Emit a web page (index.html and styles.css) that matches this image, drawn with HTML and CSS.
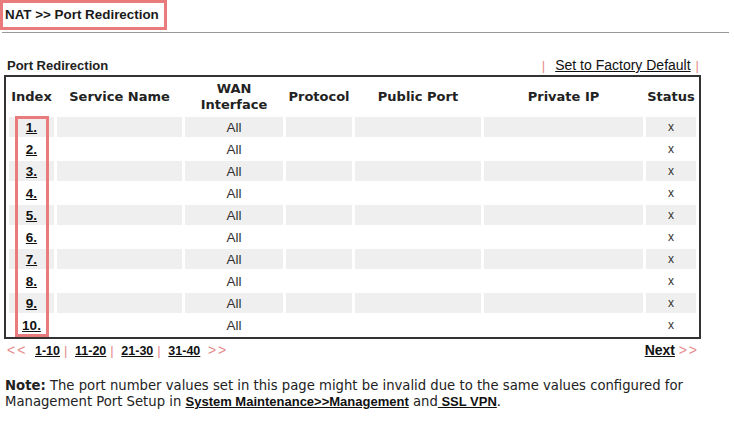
FILE: index.html
```html
<!DOCTYPE html>
<html lang="en">
<head>
  <meta charset="UTF-8">
  <title>NAT >> Port Redirection</title>
  <link rel="stylesheet" href="styles.css">
</head>
<body>
  <div class="page-title">NAT &gt;&gt; Port Redirection</div>
  <div class="title-rule"></div>

  <div class="section-head">
    <span class="section-name">Port Redirection</span>
    <span class="factory"><span class="pipe">|</span><a href="#">Set to Factory Default</a><span class="pipe">|</span></span>
  </div>

  <div class="table-wrap">
    <table class="rules">
      <colgroup>
        <col class="c-index">
        <col class="c-service">
        <col class="c-wan">
        <col class="c-proto">
        <col class="c-public">
        <col class="c-private">
        <col class="c-status">
      </colgroup>
      <thead>
        <tr>
          <th>Index</th>
          <th>Service Name</th>
          <th>WAN<br>Interface</th>
          <th>Protocol</th>
          <th>Public Port</th>
          <th>Private IP</th>
          <th>Status</th>
        </tr>
      </thead>
      <tbody>
        <tr class="odd"><td class="idx"><a href="#">1.</a></td><td></td><td>All</td><td></td><td></td><td></td><td class="st">x</td></tr>
        <tr><td class="idx"><a href="#">2.</a></td><td></td><td>All</td><td></td><td></td><td></td><td class="st">x</td></tr>
        <tr class="odd"><td class="idx"><a href="#">3.</a></td><td></td><td>All</td><td></td><td></td><td></td><td class="st">x</td></tr>
        <tr><td class="idx"><a href="#">4.</a></td><td></td><td>All</td><td></td><td></td><td></td><td class="st">x</td></tr>
        <tr class="odd"><td class="idx"><a href="#">5.</a></td><td></td><td>All</td><td></td><td></td><td></td><td class="st">x</td></tr>
        <tr><td class="idx"><a href="#">6.</a></td><td></td><td>All</td><td></td><td></td><td></td><td class="st">x</td></tr>
        <tr class="odd"><td class="idx"><a href="#">7.</a></td><td></td><td>All</td><td></td><td></td><td></td><td class="st">x</td></tr>
        <tr><td class="idx"><a href="#">8.</a></td><td></td><td>All</td><td></td><td></td><td></td><td class="st">x</td></tr>
        <tr class="odd"><td class="idx"><a href="#">9.</a></td><td></td><td>All</td><td></td><td></td><td></td><td class="st">x</td></tr>
        <tr><td class="idx"><a href="#">10.</a></td><td></td><td>All</td><td></td><td></td><td></td><td class="st">x</td></tr>
      </tbody>
    </table>
    <div class="index-mark"></div>
  </div>

  <div class="pager">
    <span class="pages">
      <span class="arrow">&lt;&lt;</span>
      <a href="#">1-10</a><span class="pipe">|</span>
      <a href="#">11-20</a><span class="pipe">|</span>
      <a href="#">21-30</a><span class="pipe">|</span>
      <a href="#">31-40</a>
      <span class="arrow">&gt;&gt;</span>
    </span>
    <span class="next"><a href="#">Next</a> <span class="arrow">&gt;&gt;</span></span>
  </div>

  <p class="note">
    <b>Note:</b> The port number values set in this page might be invalid due to the same values configured for<br>
    Management Port Setup in <a href="#">System Maintenance&gt;&gt;Management</a> and<a href="#"> SSL VPN</a>.
  </p>
</body>
</html>
```

FILE: styles.css
```css
:root {
  --text-color: #222;
  --mark-color: #ea7b7d;
  --row-gray: #efefef;
  --pipe-color: #e58a8a;
}

body {
  margin: 0;
  font-family: 'Liberation Sans', Arial, sans-serif;
  font-size: 13px;
  color: var(--text-color);
  background: #fff;
  width: 734px;
}

a {
  color: #111;
  font-weight: bold;
  text-decoration: underline;
}

.page-title {
  display: inline-block;
  box-sizing: border-box;
  height: 30px;
  padding: 4px 5px 0 2px;
  border: 3px solid var(--mark-color);
  font-weight: bold;
  font-size: 13.4px;
  color: #1a1a1a;
}

.title-rule {
  margin: 2px 5px 0 2px;
  height: 1px;
  background: #999;
}

.section-head {
  display: flex;
  justify-content: space-between;
  align-items: flex-end;
  margin: 24px 0 0 7px;
  width: 692px;
  height: 16px;
}

.section-name {
  font-weight: bold;
  font-size: 13px;
}

.factory a {
  font-weight: normal;
  font-size: 14px;
  margin: 0 5px 0 10px;
}

.pipe {
  color: var(--pipe-color);
}

.table-wrap {
  position: relative;
  margin: 2px 0 0 4px;
  width: 697px;
}

.rules {
  width: 697px;
  table-layout: fixed;
  border: 2px solid #333;
  border-spacing: 3px 2px;
  font-family: 'DejaVu Sans', Verdana, sans-serif;
}

.c-index { width: 45px; }
.c-service { width: 125px; }
.c-wan { width: 98px; }
.c-proto { width: 66px; }
.c-public { width: 126px; }
.c-private { width: 159px; }
.c-status { width: 50px; }

.rules th {
  height: 36px;
  padding: 0;
  font-size: 13px;
  font-weight: bold;
  line-height: 16px;
  color: #222;
}

.rules td {
  height: 20px;
  padding: 0;
  text-align: center;
  font-family: 'Liberation Sans', Arial, sans-serif;
  font-size: 13.5px;
  color: #333;
}

.rules tr.odd td {
  background: var(--row-gray);
}

.rules td.idx a {
  font-size: 13.5px;
}

.rules td.st {
  font-size: 12px;
}

.index-mark {
  position: absolute;
  left: 11px;
  top: 41px;
  width: 34px;
  height: 221px;
  box-sizing: border-box;
  border: 3px solid var(--mark-color);
}

.pager {
  display: flex;
  justify-content: space-between;
  width: 692px;
  margin: 3px 0 0 7px;
  height: 16px;
  font-size: 13px;
}

.pages a {
  font-size: 12.5px;
  margin: 0 4px;
}

.arrow {
  color: var(--pipe-color);
  font-size: 14px;
  letter-spacing: 2px;
}

.next a {
  font-size: 14px;
}

.note {
  margin: 19px 0 0 5px;
  font-family: 'DejaVu Sans Condensed', 'DejaVu Sans', sans-serif;
  font-size: 14.7px;
  line-height: 16px;
  color: #222;
}

.note b {
  font-weight: bold;
}

.note a {
  font-family: 'Liberation Sans Narrow', 'Liberation Sans', Arial, sans-serif;
  font-size: 13px;
}
```
